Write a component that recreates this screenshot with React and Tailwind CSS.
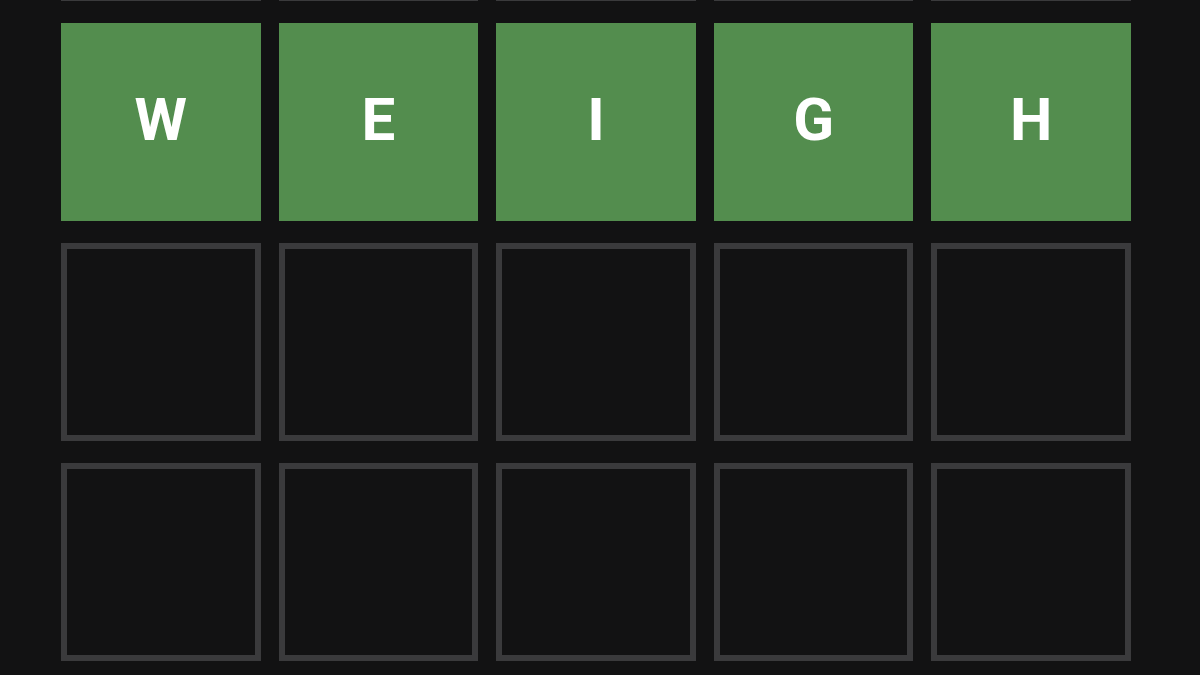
const rows = [
  ['', '', '', '', ''],
  ['W', 'E', 'I', 'G', 'H'],
  ['', '', '', '', ''],
  ['', '', '', '', ''],
];

function Tile({ letter, solved }) {
  if (solved) {
    return (
      <div className="h-[198px] bg-[#538d4e] flex items-center justify-center pb-[4px] text-white text-[60px] font-bold leading-none font-['Roboto','Liberation_Sans',sans-serif]">
        {letter}
      </div>
    );
  }
  return <div className="h-[198px] border-[6px] border-[#3a3a3c] bg-[#121213]" />;
}

export default function App() {
  return (
    <div className="w-[1200px] h-[675px] bg-[#121213] overflow-hidden">
      <div className="flex flex-col gap-[22px] pl-[61px] pr-[69px] mt-[-197px]">
        {rows.map((row, i) => (
          <div key={i} className="grid grid-cols-5 gap-[18px]">
            {row.map((l, j) => (
              <Tile key={j} letter={l} solved={i === 1} />
            ))}
          </div>
        ))}
      </div>
    </div>
  );
}
